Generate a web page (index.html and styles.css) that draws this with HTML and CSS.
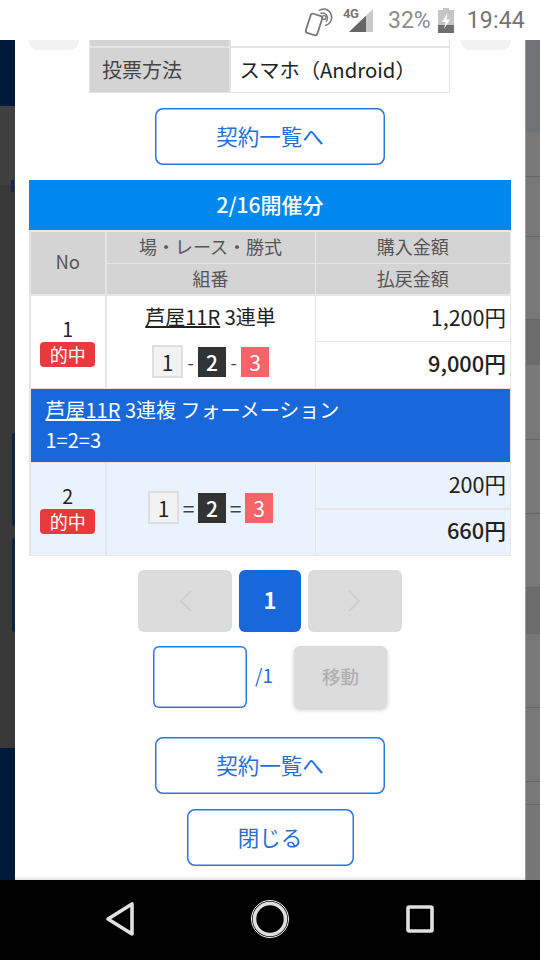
FILE: index.html
```html
<!DOCTYPE html>
<html lang="ja">
<head>
<meta charset="utf-8">
<title>契約内容</title>
<link rel="stylesheet" href="styles.css">
</head>
<body>
<div class="screen">
  <header class="status">
    <svg class="ic-nfc" width="32" height="30" viewBox="0 0 32 30" fill="none" stroke="#777">
      <rect x="4" y="7.5" width="12" height="20" rx="2" transform="rotate(18 10 17.5)" stroke-width="1.8"/>
      <path d="M15 3.6a8.6 8.6 0 0 1 6-1.6 8.6 8.6 0 0 1 4.8 13.6 8 8 0 0 1-4.8 3" stroke-width="1.5"/>
      <path d="M16.5 6.5a5.4 5.4 0 0 1 5.5 1 5.4 5.4 0 0 1 .2 7.2" stroke-width="1.5"/>
      <circle cx="20" cy="10.5" r="1.9" stroke-width="1.4"/>
    </svg>
    <span class="net">4G</span>
    <svg class="ic-sig" width="24" height="24" viewBox="0 0 24 24">
      <path d="M0 23 24 0v23z" fill="#c9c9c9"/>
      <path d="M0 23 17 6.7V23z" fill="#666"/>
    </svg>
    <span class="pct">32%</span>
    <svg class="ic-bat" width="16" height="25" viewBox="0 0 16 25">
      <path d="M5 0h6v2h5v23H0V2h5z" fill="#c6c6c6"/>
      <path d="M0 17h16v8H0z" fill="#707070"/>
      <path d="M9.5 5 4 14h3.5L6 21l6-9.500H8.500z" fill="#fff"/>
    </svg>
    <span class="time">19:44</span>
  </header>

  <div class="middle">
    <div class="side side-left">
      <div class="l-navy"></div>
      <div class="l-grey">
        <i class="tick"></i>
        <i class="pill pill-a"></i>
        <i class="pill pill-b"></i>
      </div>
      <div class="l-navy2"></div>
    </div>

    <main class="modal">
      <div class="tabs"><span class="tab"></span><span class="tab"></span></div>
      <div class="info">
        <div class="info-stub"></div><div class="info-stub white"></div>
        <div class="info-label">投票方法</div><div class="info-value">スマホ（Android）</div>
      </div>

      <a class="btn btn-list first">契約一覧へ</a>

      <h2 class="day">2/16開催分</h2>
      <div class="grid">
        <div class="th th-no">No</div>
        <div class="th">場・レース・勝式</div>
        <div class="th">購入金額</div>
        <div class="th">組番</div>
        <div class="th">払戻金額</div>

        <div class="td no span2"><span>1</span><b class="hit">的中</b></div>
        <div class="td race span2">
          <div class="race-name"><u>芦屋11R</u> 3連単</div>
          <div class="nums gap-a"><i class="n n1">1</i><em>-</em><i class="n n2">2</i><em>-</em><i class="n n3">3</i></div>
        </div>
        <div class="td amt">1,200円</div>
        <div class="td amt strong">9,000円</div>

        <div class="bar"><u>芦屋11R</u> 3連複 フォーメーション<br>1=2=3</div>

        <div class="td no span2 tint"><span>2</span><b class="hit">的中</b></div>
        <div class="td race span2 tint">
          <div class="nums gap-b"><i class="n n1">1</i><em>=</em><i class="n n2">2</i><em>=</em><i class="n n3">3</i></div>
        </div>
        <div class="td amt tint">200円</div>
        <div class="td amt strong tint">660円</div>
      </div>

      <nav class="pager">
        <span class="pg pg-arrow"><svg width="16" height="28" viewBox="0 0 16 28" fill="none" stroke="#cfcfcf" stroke-width="2"><path d="M14 4 4 14l10 10"/></svg></span>
        <span class="pg pg-cur">1</span>
        <span class="pg pg-arrow"><svg width="16" height="28" viewBox="0 0 16 28" fill="none" stroke="#cfcfcf" stroke-width="2"><path d="m2 4 10 10L2 24"/></svg></span>
      </nav>

      <div class="jump">
        <input class="jump-input" type="text" aria-label="ページ">
        <span class="jump-total">/1</span>
        <span class="jump-go">移動</span>
      </div>

      <a class="btn btn-list second">契約一覧へ</a>
      <a class="btn btn-close">閉じる</a>
    </main>

    <div class="side side-right">
      <div class="r-top"></div>
      <div class="r-row h45"></div>
      <div class="r-row h60"></div>
      <div class="r-row h83"></div>
      <div class="r-row dark h45"></div>
      <div class="r-row h75"></div>
      <div class="r-row h74"></div>
      <div class="r-row h74"></div>
      <div class="r-row dark h46"></div>
      <div class="r-row h74"></div>
      <div class="r-row h74"></div>
      <div class="r-row h23"></div>
    </div>
  </div>

  <footer class="navbar">
    <svg width="32" height="36" viewBox="0 0 32 36" fill="none" stroke="#e0e0e0" stroke-width="3.600" stroke-linejoin="round"><path d="M28 3v30L4 18z"/></svg>
    <svg width="40" height="40" viewBox="0 0 40 40" fill="none"><circle cx="20" cy="20" r="18.500" stroke="#f4f4f4" stroke-width="1"/><circle cx="20" cy="20" r="15.500" stroke="#dedede" stroke-width="3.600"/></svg>
    <svg width="32" height="32" viewBox="0 0 32 32" fill="none" stroke="#e0e0e0" stroke-width="3.600" stroke-linejoin="round"><rect x="4" y="4" width="24" height="24" rx="1"/></svg>
  </footer>
</div>
</body>
</html>
```
FILE: styles.css
```css
* { box-sizing: border-box; }
html, body { margin: 0; padding: 0; }
body {
  width: 540px;
  height: 960px;
  overflow: hidden;
  background: #000;
  font-family: "Noto Sans CJK JP", "Noto Sans", sans-serif;
  color: #222;
}
.screen { display: flex; flex-direction: column; width: 540px; height: 960px; }

/* status bar */
.status {
  flex: 0 0 40px;
  display: flex;
  align-items: flex-start;
  background: #fff;
  color: #808080;
  font-family: Roboto, sans-serif;
}
.ic-nfc { margin: 7px 0 0 304px; }
.net { margin: 6px 0 0 7px; width: 17px; font-size: 13px; line-height: 15px; font-weight: 700; color: #777; letter-spacing: -.5px; }
.ic-sig { margin: 9px 0 0 -11px; }
.pct { margin: 9px 0 0 15px; font-size: 23px; line-height: 24px; color: #8c8c8c; }
.ic-bat { margin: 8px 0 0 7px; }
.time { margin: 9px 0 0 13px; font-size: 23px; line-height: 24px; font-weight: 400; letter-spacing: .2px; color: #747474; }

/* middle */
.middle { flex: 1; display: flex; min-height: 0; }
.side { flex: 0 0 14.500px; display: flex; flex-direction: column; overflow: hidden; }
.l-navy { flex: 0 0 66px; background: #00183a; }
.l-grey { flex: 1; position: relative; background: linear-gradient(#404040 0 78px, #383838 80px); }
.l-navy2 { flex: 0 0 132px; background: #00183a; }
.tick { position: absolute; right: 1px; top: 74px; width: 2.500px; height: 12px; background: #0a2a66; }
.pill { position: absolute; right: 0; width: 3px; border-radius: 4px 0 0 4px; background: #0b2347; }
.pill-a { top: 327px; height: 93px; }
.pill-b { top: 432px; height: 94px; }
.side-right { flex: 0 0 15px; background: #777; border-left: 1px solid #9c9c9c; }
.r-top { flex: 0 0 92px; background: #6f7377; }
.r-row { background: #787878; border-bottom: 1px solid #666; }
.r-row.dark { background: #6c6c6c; border-bottom: 0; }
.h45 { height: 45px; } .h60 { height: 60px; } .h83 { height: 83px; }
.h75 { height: 75px; } .h74 { height: 74px; } .h46 { height: 46px; } .h23 { height: 23px; }

/* modal */
.modal {
  flex: 1;
  min-width: 0;
  display: flex;
  flex-direction: column;
  background: #fff;
  padding: 0 14px 0 14.500px;
  overflow: hidden;
  box-shadow: inset 0 -3px 3px -1px #e4e4e4;
}
.tabs { height: 0; display: flex; justify-content: space-between; }
.tab { display: block; width: 50px; height: 10px; background: #f2f2f2; border-radius: 0 0 9px 9px; }
.info {
  align-self: center;
  width: 361px;
  margin-left: -1px;
  display: grid;
  grid-template-columns: 139px 1fr;
  grid-template-rows: 6px 44px;
  gap: 1.500px;
  padding: 0 1px 1.500px;
  background: #e4e4e4;
}
.info-stub { background: #d4d4d4; }
.info-stub.white { background: #fff; }
.info-label { background: #d4d4d4; color: #444; font-size: 20px; padding: 0 0 1px 12px; display: flex; align-items: center; }
.info-value { background: #fff; color: #222; font-size: 20.300px; padding: 0 0 1px 9px; display: flex; align-items: center; }

.btn {
  align-self: center;
  display: flex;
  align-items: center;
  justify-content: center;
  height: 57px;
  padding-bottom: 3px;
  box-shadow: inset 0 0 0 1.500px #2a77e0;
  border-radius: 8px;
  color: #1f6fdc;
  font-size: 21.500px;
  background: #fff;
}
.btn-list { width: 230px; }
.first { margin-top: 15px; }
.second { margin-top: 29px; }
.btn-close { width: 167px; margin-top: 15px; }

.day {
  margin: 15px 0 0;
  height: 50px;
  background: #0088ee;
  color: #fff;
  font-size: 21px;
  font-weight: 500;
  text-align: center;
  line-height: 48px;
}
.grid {
  display: grid;
  grid-template-columns: 74.500px 208px 1fr;
  grid-template-rows: 31px 30px 45px 45.500px 72.500px 45px 45px;
  gap: 1.500px;
  padding: 1.500px;
  background: #e6e6e6;
}
.th { background: #d4d4d4; color: #555; font-size: 18px; padding-bottom: 2px; display: flex; align-items: center; justify-content: center; }
.th-no { grid-row: span 2; font-size: 18.500px; padding-bottom: 3px; }
.td { background: #fff; }
.tint { background: #eaf2fd; }
.span2 { grid-row: span 2; }
.no { display: flex; flex-direction: column; align-items: center; justify-content: center; font-size: 19.500px; line-height: 26px; padding-bottom: 1px; }
.hit {
  display: block;
  width: 55px;
  height: 25px;
  background: #e83a3c;
  border-radius: 4px;
  color: #fff;
  font-weight: 400;
  font-size: 18px;
  line-height: 24px;
  text-align: center;
}
.race { display: flex; flex-direction: column; align-items: center; justify-content: center; padding: 0 0 2px; }
.race-name { font-size: 20px; line-height: 28px; margin-bottom: 14px; }
.nums { display: flex; align-items: center; }
.nums em { font-style: normal; color: #444; font-size: 18px; width: 15px; text-align: center; }
.gap-b em { width: 19px; font-size: 21px; }
.n { display: flex; align-items: center; justify-content: center; width: 28px; height: 30px; font-style: normal; font-size: 21px; font-weight: 500; }
.n1 { width: 31px; height: 33px; background: #f2f2f2; border: 2px solid #dedede; color: #222; font-weight: 400; }
.n2 { background: #333; color: #fff; }
.n3 { background: #f56468; color: #fff; font-weight: 400; }
.amt { font-size: 21.500px; padding: 0 3.500px 4px 0; display: flex; align-items: center; justify-content: flex-end; }
.strong { font-size: 21.800px; font-weight: 500; padding-bottom: 5px; }
.bar { grid-column: 1 / -1; background: #1868dc; color: #fff; font-size: 20px; line-height: 30px; padding: 6px 0 0 15px; }

.pager { display: flex; justify-content: center; gap: 7px; margin-top: 14px; }
.pg { display: flex; align-items: center; justify-content: center; height: 62px; border-radius: 6px; }
.pg-arrow { width: 94px; background: #dcdcdc; }
.pg-cur { width: 62px; background: #1868dc; color: #fff; font-size: 22px; font-weight: 700; padding-bottom: 5px; }

.jump { display: flex; align-items: center; margin-top: 14px; padding-left: 124px; }
.jump-input { width: 94px; height: 62px; border: 0; box-shadow: inset 0 0 0 1.500px #2a77e0; border-radius: 6px; background: #fff; padding: 0; }
.jump-total { width: 47px; padding: 0 0 5px 8px; color: #1f6fdc; font-size: 19px; }
.jump-go {
  width: 93px;
  height: 62px;
  display: flex;
  align-items: center;
  justify-content: center;
  padding-bottom: 3px;
  background: #dcdcdc;
  border-radius: 6px;
  color: #b0b0b0;
  font-size: 18.500px;
  font-weight: 500;
  box-shadow: 0 2px 4px rgba(0,0,0,.22);
}

/* nav bar */
.navbar {
  flex: 0 0 80px;
  background: #000;
  display: flex;
  align-items: center;
  justify-content: space-between;
  padding: 0 104px 2px 104px;
}
```
